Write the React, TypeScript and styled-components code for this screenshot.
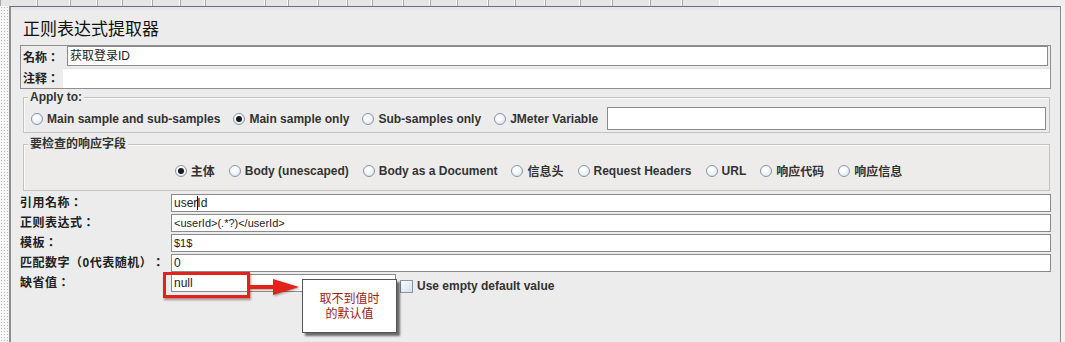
import React from 'react';
import styled, { createGlobalStyle } from 'styled-components';

const GlobalStyle = createGlobalStyle`
	html, body { margin: 0; padding: 0; background: #ececec; }
	body {
		font-family: "Liberation Sans", "Noto Sans CJK SC", sans-serif;
		font-size: 12px;
		color: #333;
		text-spacing-trim: space-all;
	}
	* { box-sizing: border-box; }
`;

const labelFont = '"Liberation Sans", "Noto Sans CJK JP", sans-serif';

const tabWidths = [37, 33, 27, 25, 30, 28, 25, 60, 23, 30, 29, 25, 31, 27, 27, 31, 27, 30, 35, 32, 38, 32, 38];

const applyOptions = [
	{ label: 'Main sample and sub-samples', on: false },
	{ label: 'Main sample only', on: true },
	{ label: 'Sub-samples only', on: false },
	{ label: 'JMeter Variable', on: false },
];

const fieldOptions = [
	{ label: '主体', on: true },
	{ label: 'Body (unescaped)', on: false },
	{ label: 'Body as a Document', on: false },
	{ label: '信息头', on: false },
	{ label: 'Request Headers', on: false },
	{ label: 'URL', on: false },
	{ label: '响应代码', on: false },
	{ label: '响应信息', on: false },
];

const formRows = [
	{ label: '引用名称：', value: 'userId', small: false },
	{ label: '正则表达式：', value: '<userId>(.*?)</userId>', small: true },
	{ label: '模板：', value: '$1$', small: true },
	{ label: '匹配数字（0代表随机）：', value: '0', small: false },
];

const RadioOption = ({ label, on }: { label: string; on: boolean }) => (
	<OptionItem>
		<Radio $on={on} />
		<span>{label}</span>
	</OptionItem>
);

export default function App() {
	return <Screen>
		<GlobalStyle />
		<TabStrip>
			{tabWidths.map((w, i) => <TabCell key={i} $w={w} />)}
		</TabStrip>
		<Body>
			<DottedEdge />
			<Panel>
				<Title>正则表达式提取器</Title>
				<NameBox>
					<NameRow>
						<NameLabel $w={46}>名称：</NameLabel>
						<NameInput $framed>获取登录ID</NameInput>
					</NameRow>
					<NameRow>
						<NameLabel $w={42}>注释：</NameLabel>
						<NameInput />
					</NameRow>
				</NameBox>

				<Group>
					<Legend>Apply to:</Legend>
					<ApplyRow>
						{applyOptions.map(o => <RadioOption key={o.label} {...o} />)}
						<VariableInput />
					</ApplyRow>
				</Group>

				<Group $warm $top={4}>
					<Legend>要检查的响应字段</Legend>
					<FieldRow>
						{fieldOptions.map(o => <RadioOption key={o.label} {...o} />)}
					</FieldRow>
				</Group>

				<Form>
					{formRows.map((r, i) => <React.Fragment key={r.label}>
						<FormLabel>{r.label}</FormLabel>
						<TextField $small={r.small}>
							{i === 0 ? <>user<Caret />Id</> : r.value}
						</TextField>
					</React.Fragment>)}
					<FormLabel>缺省值：</FormLabel>
					<DefaultCell>
						<NullField>null</NullField>
						<CheckBox />
						<CheckLabel>Use empty default value</CheckLabel>

						<Highlight />
						<Arrow width="52" height="16" viewBox="0 0 52 16">
							<rect x="0" y="6" width="27" height="4" fill="#e3221b" />
							<polygon points="24,0 50,8 24,16" fill="#e3221b" />
						</Arrow>
						<Callout>取不到值时<br />的默认值</Callout>
					</DefaultCell>
				</Form>
			</Panel>
			<RightEdge />
		</Body>
	</Screen>;
}

const Screen = styled.div`
	width: 1065px;
	height: 342px;
	overflow: hidden;
	display: flex;
	flex-direction: column;
	background: #ececec;
`;

const TabStrip = styled.div`
	height: 6px;
	flex: none;
	display: flex;
	background: #eeeeee;
`;

const TabCell = styled.div<{ $w: number }>`
	width: ${p => p.$w}px;
	border-left: 1px solid #a9a9a9;
	border-right: 1px solid #fbfbfb;
	background: #e6e6e6;
`;

const Body = styled.div`
	flex: 1;
	display: flex;
	min-height: 0;
`;

const DottedEdge = styled.div`
	width: 9px;
	flex: none;
	background-color: #f7f7f7;
	background-image: radial-gradient(#b9b9b9 0.7px, transparent 0.9px);
	background-size: 3px 3px;
`;

const RightEdge = styled.div`
	width: 4px;
	flex: none;
	background: #f3f3f3;
`;

const Panel = styled.div`
	flex: 1;
	background: #ececec;
	border-top: 1px solid #6f6f6f;
	border-left: 2px solid #8e8e8e;
	border-right: 1px solid #8a8a8a;
	box-shadow: inset 0 3px 0 #e4e7f1;
	padding: 0 9px 0 9px;
`;

const Title = styled.h1`
	margin: 0;
	height: 38px;
	padding: 12px 0 0 3px;
	font-size: 17px;
	line-height: 22px;
	font-weight: normal;
	color: #111;
`;

const NameBox = styled.div`
	border: 1px solid #8f8f8f;
	display: flex;
	flex-direction: column;
`;

const NameRow = styled.div`
	display: flex;
	align-items: center;
	height: 21px;
`;

const NameLabel = styled.span<{ $w: number }>`
	width: ${p => p.$w}px;
	padding-left: 2px;
	font-family: ${labelFont};
	font-weight: bold;
	color: #222;
	flex: none;
`;

const NameInput = styled.div<{ $framed?: boolean }>`
	flex: 1;
	align-self: stretch;
	background: #fff;
	margin: ${p => p.$framed ? '0 2px 1px 0' : '1px 0 0 0'};
	border: ${p => p.$framed ? '1px solid #8a8a8a' : 'none'};
	border-top: 1px solid ${p => p.$framed ? '#8a8a8a' : '#e2e2e2'};
	padding: 0 2px;
	line-height: 18px;
	font-size: 12px;
	color: #222;
`;

const Group = styled.fieldset<{ $warm?: boolean; $top?: number }>`
	margin: ${p => p.$top ?? 1}px 1px 0 3px;
	padding: 0 3px 2px 7px;
	border: 1px solid #c3c3c3;
	box-shadow: inset 1px 1px 0 #fafafa;
	background: ${p => p.$warm ? '#eeecea' : 'transparent'};
	min-width: 0;
`;

const Legend = styled.legend`
	padding: 0 2px;
	margin-left: -3px;
	font-weight: bold;
	line-height: 14px;
	color: #333;
	background: #ececec;
`;

const ApplyRow = styled.div`
	display: flex;
	align-items: center;
	gap: 13px;
	height: 26px;
	padding-top: 3px;
`;

const FieldRow = styled.div`
	display: flex;
	align-items: center;
	justify-content: center;
	gap: 14px;
	height: 37px;
	padding-top: 2px;
`;

const OptionItem = styled.label`
	display: flex;
	align-items: center;
	gap: 4px;
	font-weight: bold;
	color: #333;
	white-space: nowrap;
`;

const Radio = styled.span<{ $on?: boolean }>`
	width: 12px;
	height: 12px;
	border-radius: 50%;
	border: 1px solid #8795a6;
	background: radial-gradient(circle at 40% 35%, #ffffff 20%, #d3deea 100%);
	display: flex;
	align-items: center;
	justify-content: center;
	flex: none;

	&::after {
		content: '';
		display: ${p => p.$on ? 'block' : 'none'};
		width: 6px;
		height: 6px;
		border-radius: 50%;
		background: #1a1a1a;
	}
`;

const VariableInput = styled.div`
	flex: 1;
	height: 23px;
	margin-left: -4px;
	background: #fff;
	border: 1px solid #8a8a8a;
`;

const Form = styled.div`
	margin-top: 3px;
	display: grid;
	grid-template-columns: 151px 1fr;
	row-gap: 2px;
`;

const FormLabel = styled.div`
	height: 18px;
	line-height: 18px;
	font-family: ${labelFont};
	font-weight: bold;
	letter-spacing: 0.5px;
	color: #222;
	white-space: nowrap;
`;

const TextField = styled.div<{ $small?: boolean }>`
	height: 18px;
	background: #fff;
	border: 1px solid #8a8a8a;
	padding: 0 2px;
	line-height: 16px;
	font-size: ${p => p.$small ? '11px' : '12px'};
	color: #222;
	white-space: nowrap;
	display: flex;
	align-items: center;
`;

const Caret = styled.span`
	display: inline-block;
	width: 1px;
	height: 14px;
	background: #000;
	margin-right: -1px;
`;

const DefaultCell = styled.div`
	position: relative;
	display: flex;
	align-items: flex-start;
	height: 30px;
`;

const NullField = styled(TextField)`
	width: 225px;
	flex: none;
`;

const CheckBox = styled.span`
	width: 13px;
	height: 13px;
	margin: 6px 0 0 4px;
	border: 1px solid #8795a6;
	background: linear-gradient(135deg, #ffffff, #d3deea);
	flex: none;
`;

const CheckLabel = styled.span`
	margin: 5px 0 0 4px;
	font-weight: bold;
	line-height: 14px;
	color: #333;
`;

const Highlight = styled.div`
	position: absolute;
	left: -8px;
	top: -2px;
	width: 87px;
	height: 26px;
	border: 3px solid #e3221b;
	box-shadow: 1px 2px 2px rgba(90, 20, 20, 0.45);
`;

const Arrow = styled.svg`
	position: absolute;
	left: 78px;
	top: 5px;
	filter: drop-shadow(1px 1px 1px rgba(80, 20, 20, 0.45));
`;

const Callout = styled.div`
	position: absolute;
	left: 131px;
	top: 5px;
	width: 95px;
	height: 54px;
	padding-top: 12px;
	background: #fff;
	border: 1px solid #555;
	box-shadow: 3px 3px 2px rgba(0, 0, 0, 0.55);
	text-align: center;
	font-size: 12px;
	line-height: 15px;
	color: #9c1c14;
`;
